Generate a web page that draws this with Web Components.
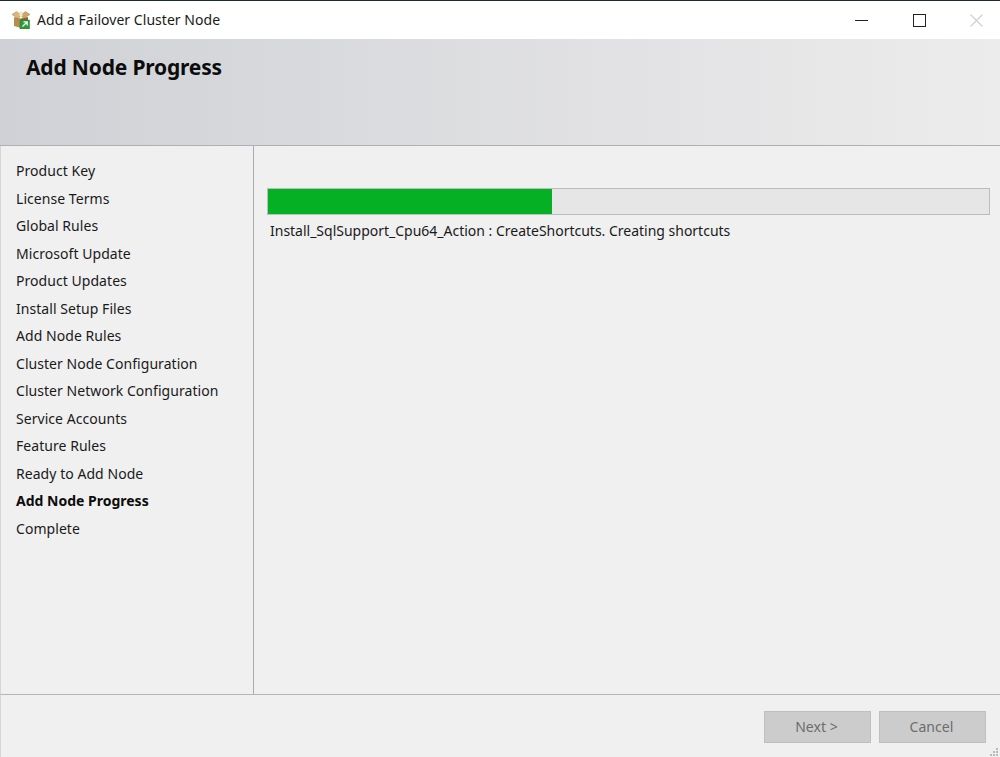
<!DOCTYPE html>
<html>
<head>
<meta charset="utf-8">
<title>Add a Failover Cluster Node</title>
<style>
html, body { margin: 0; height: 100%; background: #f0f0f0; }
body { font-family: "Noto Sans", "Open Sans", sans-serif; color: #111; overflow: hidden; }
</style>
</head>
<body>
<wizard-window caption="Add a Failover Cluster Node" heading="Add Node Progress">
    <step-list slot="steps" active="Add Node Progress"
        steps="Product Key|License Terms|Global Rules|Microsoft Update|Product Updates|Install Setup Files|Add Node Rules|Cluster Node Configuration|Cluster Network Configuration|Service Accounts|Feature Rules|Ready to Add Node|Add Node Progress|Complete"></step-list>
    <progress-panel value="39.4" text="Install_SqlSupport_Cpu64_Action : CreateShortcuts. Creating shortcuts"></progress-panel>
    <wizard-button slot="buttons">Next &gt;</wizard-button>
    <wizard-button slot="buttons">Cancel</wizard-button>
</wizard-window>

<script>
const windowTemplate = document.createElement('template');

windowTemplate.innerHTML = `
<style>
:host {
    display: flex;
    flex-direction: column;
    width: 1000px;
    height: 757px;
    box-sizing: border-box;
    border-top: 1px solid #1c2a38;
    background: #f0f0f0;
    overflow: hidden;
}
.titlebar {
    flex: 0 0 38px;
    display: flex;
    align-items: center;
    background: #fff;
    padding-left: 12px;
    font-size: 14px;
    color: #1a1a1a;
}
.titlebar svg.app { margin: 0 7px 1px 0; flex-shrink: 0; }
.caption { flex: 1; letter-spacing: 0.04px; padding-bottom: 2px; }
.controls { display: flex; margin-right: -5.5px; }
.controls div { width: 57.5px; height: 38px; display: flex; align-items: center; justify-content: center; }
.header {
    flex: 0 0 107px;
    box-sizing: border-box;
    padding: 14px 0 0 26px;
    background: linear-gradient(to right, #d0d1d6, #ececec);
    border-bottom: 1px solid #aeb0b4;
    font-size: 21px;
    font-weight: bold;
    line-height: 29px;
    letter-spacing: -0.18px;
    color: #0c0c0c;
}
.middle { flex: 1; display: flex; min-height: 0; border-left: 1px solid #d6d6d6; }
.steps { flex: 0 0 252px; border-right: 1px solid #a9abae; }
.content { flex: 1; }
.footer {
    flex: 0 0 63px;
    box-sizing: border-box;
    border-top: 1px solid #b4b5b9;
    border-left: 1px solid #d6d6d6;
    display: flex;
    justify-content: flex-end;
    gap: 8px;
    padding: 16px 14px 0 0;
    position: relative;
}
.grip { position: absolute; right: 1px; bottom: 1px; }
</style>
<div class="titlebar">
    <svg class="app" width="18" height="18" viewBox="0 0 18 18">
        <path d="M2 6l7 1.500V17l-7-2z" fill="#b98d50"/>
        <path d="M9 7.500l7-1.500v9l-7 2z" fill="#8c6232"/>
        <path d="M0 3.500l4.500-3 4.500 3.500-2.500 3.500z" fill="#dcb87e" stroke="#a67c43" stroke-width="0.500"/>
        <path d="M18 3.500l-4.500-3-4.500 3.500 2.500 3.500z" fill="#cda768" stroke="#a67c43" stroke-width="0.500"/>
        <path d="M7.500 0.500h3v4.500h-3z" fill="#f1e6c8"/>
        <rect x="8" y="9" width="9.500" height="9" fill="#2f9a3c" stroke="#1d7a2b" stroke-width="0.500"/>
        <path d="M10.500 15.500l4.500-4.500M11.500 10.800h3.700v3.700" fill="none" stroke="#eef8ee" stroke-width="1.300"/>
    </svg>
    <span class="caption" id="caption"></span>
    <div class="controls">
        <div><svg width="13" height="12"><path d="M0 6.500h13" stroke="#222" stroke-width="1"/></svg></div>
        <div><svg width="13" height="13"><rect x="0.500" y="0.500" width="12" height="12" fill="none" stroke="#222"/></svg></div>
        <div><svg width="13" height="13"><path d="M0.500 0.500l12 12M12.500 0.500l-12 12" stroke="#cfcfcf" stroke-width="1.100"/></svg></div>
    </div>
</div>
<div class="header" id="heading"></div>
<div class="middle">
    <div class="steps"><slot name="steps"></slot></div>
    <div class="content"><slot></slot></div>
</div>
<div class="footer">
    <slot name="buttons"></slot>
    <svg class="grip" width="9" height="9" fill="#b9b9b9">
        <rect x="6" y="1" width="2" height="2"/><rect x="3" y="4" width="2" height="2"/><rect x="6" y="4" width="2" height="2"/>
        <rect x="0" y="7" width="2" height="2"/><rect x="3" y="7" width="2" height="2"/><rect x="6" y="7" width="2" height="2"/>
    </svg>
</div>
`;

class WizardWindow extends HTMLElement {
    constructor() {
        super();
        this.attachShadow({ mode: 'open' });
        this.shadowRoot.appendChild(windowTemplate.content.cloneNode(true));
        this.shadowRoot.getElementById('caption').textContent = this.getAttribute('caption');
        this.shadowRoot.getElementById('heading').textContent = this.getAttribute('heading');
    }
}

class StepList extends HTMLElement {
    constructor() {
        super();
        this.attachShadow({ mode: 'open' });
        const active = this.getAttribute('active');
        const items = this.getAttribute('steps').split('|').map(s =>
            `<li class="${s === active ? 'on' : ''}">${s}</li>`).join('');
        this.shadowRoot.innerHTML = `
<style>
:host { display: block; padding: 11px 0 0 15px; }
ul { list-style: none; margin: 0; padding: 0; }
li { height: 27.5px; line-height: 27.5px; font-size: 14px; letter-spacing: 0.05px; color: #1a1a1a; white-space: nowrap; }
li.on { font-weight: bold; color: #0c0c0c; letter-spacing: 0; }
</style>
<ul>${items}</ul>`;
    }
}

class ProgressPanel extends HTMLElement {
    constructor() {
        super();
        this.attachShadow({ mode: 'open' });
        this.shadowRoot.innerHTML = `
<style>
:host { display: block; padding: 42px 10px 0 14px; margin-left: -1px; }
.track { height: 27px; box-sizing: border-box; background: #e6e6e6; border: 1px solid #bcbcbc; }
.fill { height: 100%; background: #06b025; }
.text { margin: 5px 0 0 3px; font-size: 14px; line-height: 22px; letter-spacing: -0.01px; color: #1a1a1a; white-space: nowrap; }
</style>
<div class="track"><div class="fill" style="width:${this.getAttribute('value')}%"></div></div>
<div class="text">${this.getAttribute('text')}</div>`;
    }
}

class WizardButton extends HTMLElement {
    constructor() {
        super();
        this.attachShadow({ mode: 'open' });
        this.shadowRoot.innerHTML = `
<style>
:host {
    display: flex;
    align-items: center;
    justify-content: center;
    width: 107px;
    height: 32px;
    box-sizing: border-box;
    background: #cccccc;
    border: 1px solid #bfbfbf;
    font-size: 14px;
    letter-spacing: 0.05px;
    color: #6d6d6d;
    padding: 0 2px 2px 0;
}
</style>
<slot></slot>`;
    }
}

customElements.define('wizard-window', WizardWindow);
customElements.define('step-list', StepList);
customElements.define('progress-panel', ProgressPanel);
customElements.define('wizard-button', WizardButton);
</script>
</body>
</html>
